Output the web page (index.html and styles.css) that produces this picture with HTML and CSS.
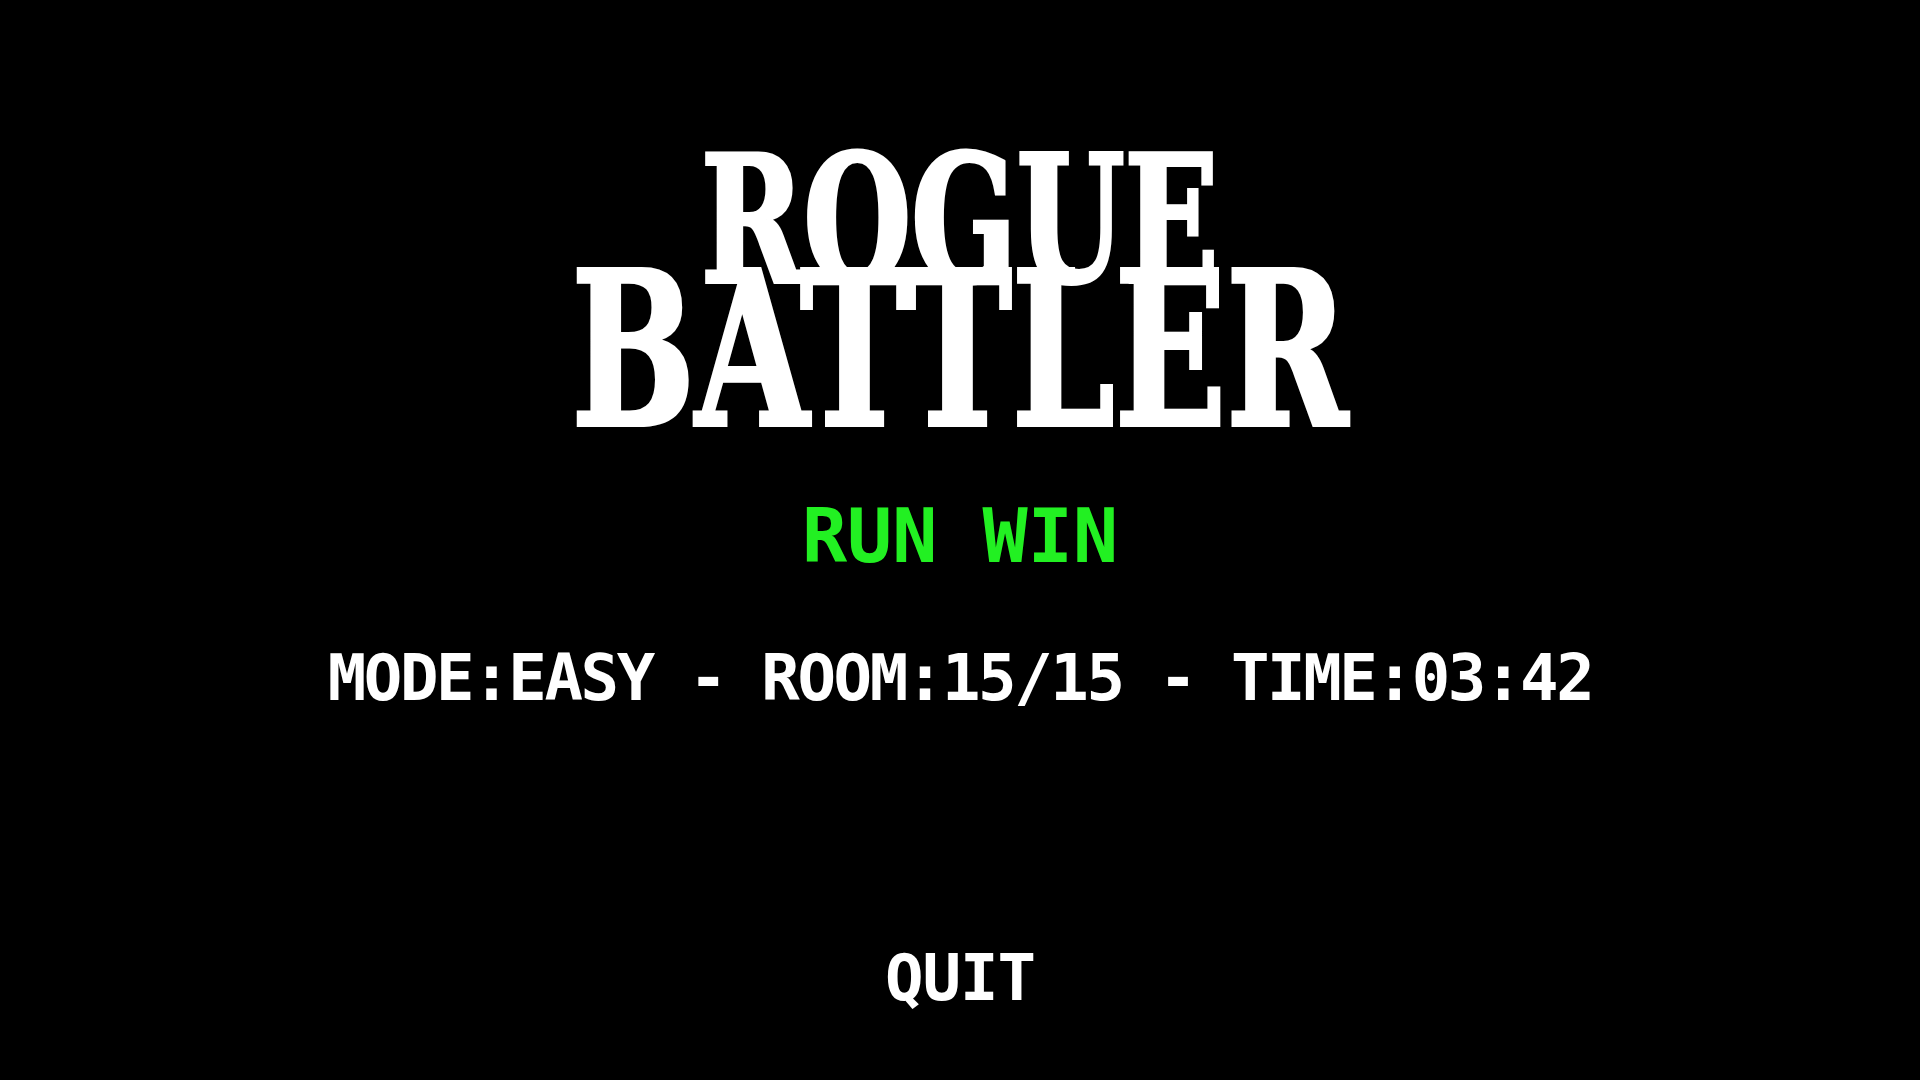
FILE: index.html
```html
<!DOCTYPE html>
<html lang="en">
<head>
<meta charset="utf-8">
<title>Rogue Battler</title>
<link rel="stylesheet" href="styles.css">
</head>
<body>
<main class="screen">
  <h1 class="title">
    <span class="title-line title-rogue"><span class="squash">ROGUE</span></span>
    <span class="title-line title-battler"><span class="squash squash-wide">BATTLER</span></span>
  </h1>
  <div class="result">RUN WIN</div>
  <div class="stats">MODE:EASY - ROOM:15/15 - TIME:03:42</div>
  <button class="quit" type="button">QUIT</button>
</main>
</body>
</html>
```

FILE: styles.css
```css
html, body {
  margin: 0;
  padding: 0;
  background: #000;
}

body {
  width: 1920px;
  height: 1080px;
  overflow: hidden;
}

.screen {
  display: flex;
  flex-direction: column;
  align-items: center;
  padding-top: 170px;
  color: #fff;
  font-family: "DejaVu Sans Mono", "Liberation Mono", monospace;
  font-weight: bold;
}

.title {
  margin: 0;
  display: flex;
  flex-direction: column;
  align-items: center;
  font-family: "DejaVu Serif Condensed", "DejaVu Serif", "Liberation Serif", serif;
  font-stretch: condensed;
  font-weight: bold;
  -webkit-text-stroke: 4px #fff;
}

.title-line {
  display: block;
  text-align: center;
  white-space: nowrap;
}

.squash {
  display: inline-block;
  transform: scaleX(0.78);
  transform-origin: center;
}

.squash-wide {
  transform: scaleX(0.76);
}

.title-rogue {
  font-size: 176px;
  line-height: 101px;
}

.title-battler {
  font-size: 214px;
  line-height: 158px;
}

.result {
  margin-top: 70px;
  font-size: 75px;
  line-height: 75px;
  color: #22f022;
  white-space: nowrap;
}

.stats {
  margin-top: 72px;
  font-size: 64px;
  line-height: 64px;
  letter-spacing: -2.4px;
  white-space: pre;
}

.quit {
  margin-top: 236px;
  padding: 0;
  border: 0;
  background: none;
  color: #fff;
  font-family: "DejaVu Sans Mono", "Liberation Mono", monospace;
  font-weight: bold;
  font-size: 64px;
  line-height: 64px;
  letter-spacing: -1px;
  cursor: pointer;
}
```
